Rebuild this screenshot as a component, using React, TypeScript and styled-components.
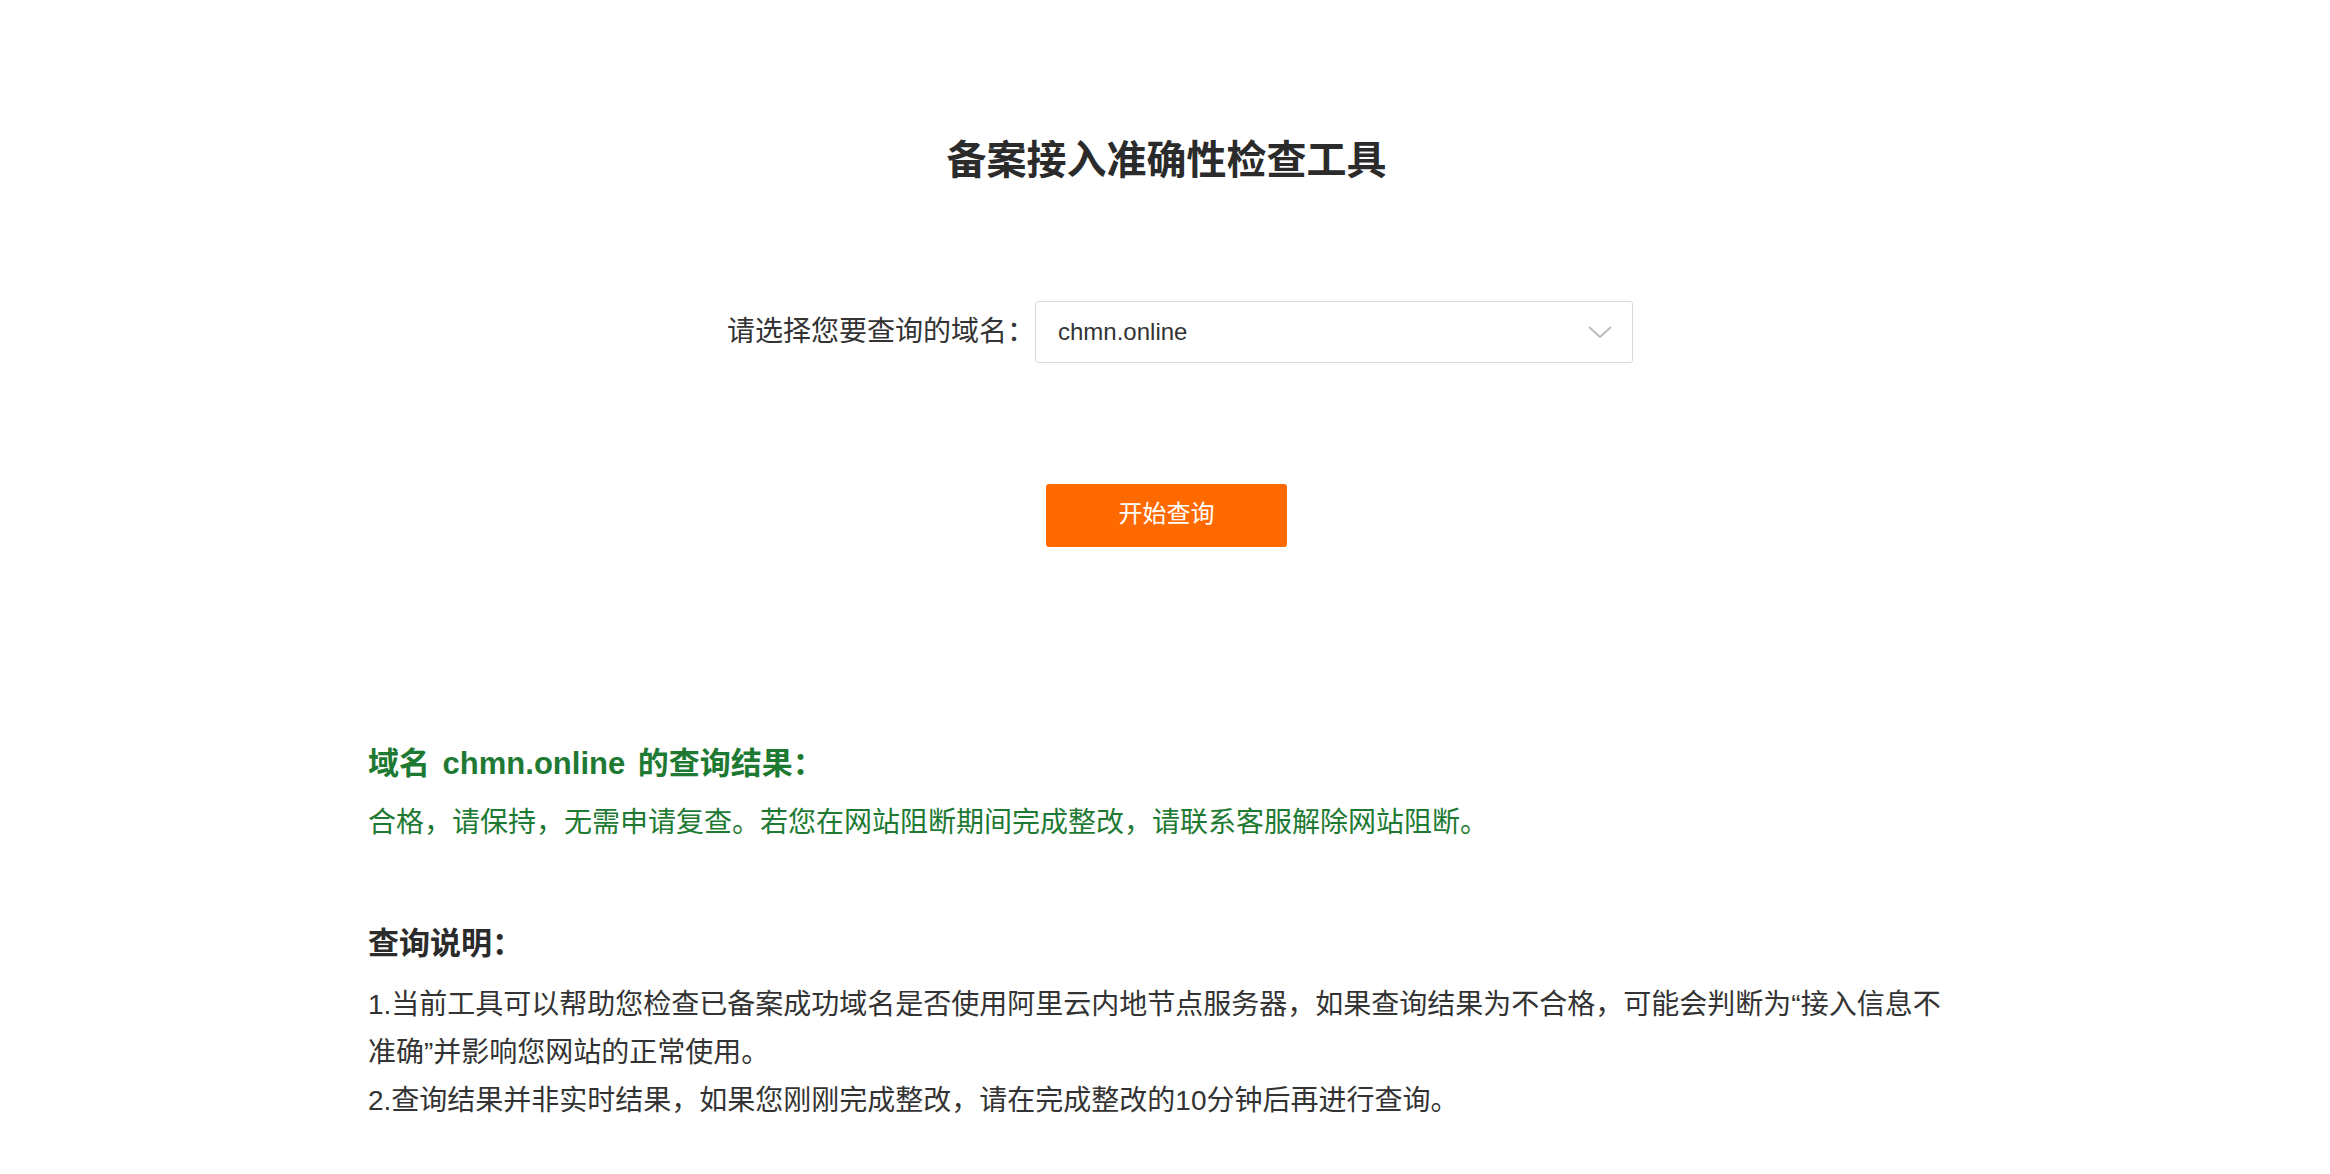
import React from "react";
import styled, { createGlobalStyle } from "styled-components";

const GlobalStyle = createGlobalStyle`
  html, body {
    margin: 0;
    padding: 0;
    background: #ffffff;
  }
  body {
    font-family: "Liberation Sans", "Noto Sans CJK SC", sans-serif;
    color: #333333;
  }
`;

const Page = styled.div`
  display: flex;
  flex-direction: column;
  align-items: center;
  padding-top: 132px;
  padding-bottom: 48px;
`;

const Title = styled.h1`
  margin: 0;
  font-size: 40px;
  line-height: 56px;
  font-weight: 700;
  color: #2b2b2b;
  padding-left: 3px;
`;

const FormRow = styled.div`
  display: flex;
  align-items: center;
  margin-top: 113px;
  padding-left: 30px;
`;

const Label = styled.label`
  font-size: 28px;
  line-height: 62px;
  color: #333333;
  white-space: nowrap;
`;

const SelectBox = styled.div`
  box-sizing: border-box;
  width: 598px;
  height: 62px;
  border: 1.5px solid #d9d9d9;
  border-radius: 3px;
  display: flex;
  align-items: center;
  justify-content: space-between;
  padding: 0 20px 0 22px;
  font-size: 24px;
  color: #333333;
  background: #fff;
`;

const Chevron = styled.svg`
  width: 24px;
  height: 12px;
  display: block;
`;

const Button = styled.button`
  margin-top: 121px;
  width: 241px;
  height: 63px;
  border: none;
  border-radius: 3px;
  background: #ff6a00;
  color: #ffffff;
  font-family: "Liberation Sans", "Noto Sans CJK SC", sans-serif;
  font-size: 24px;
  line-height: 59px;
  cursor: pointer;
  padding: 0 0 4px;
  margin-left: 3px;
`;

const Content = styled.div`
  width: 1594px;
  margin-top: 196px;
`;

const Heading = styled.h2<{ $green?: boolean }>`
  margin: 0;
  font-size: 31px;
  line-height: 42px;
  font-weight: 700;
  word-spacing: 4px;
  color: ${(p) => (p.$green ? "#1e7a33" : "#2b2b2b")};
`;

const Paragraph = styled.p<{ $green?: boolean; $gap?: number }>`
  margin: ${(p) => p.$gap ?? 0}px 0 0;
  font-size: 28px;
  line-height: 48px;
  color: ${(p) => (p.$green ? "#1e7a33" : "#333333")};
`;

const Notes = styled.section`
  margin-top: 76px;
`;

export default function App() {
  return (
    <>
      <GlobalStyle />
      <Page>
        <Title>备案接入准确性检查工具</Title>
        <FormRow>
          <Label>请选择您要查询的域名：</Label>
          <SelectBox>
            <span>chmn.online</span>
            <Chevron viewBox="0 0 24 12">
              <polyline
                points="1,1 12,11 23,1"
                fill="none"
                stroke="#bdbdbd"
                strokeWidth="2"
              />
            </Chevron>
          </SelectBox>
        </FormRow>
        <Button>开始查询</Button>
        <Content>
          <Heading $green>域名 chmn.online 的查询结果：</Heading>
          <Paragraph $green $gap={14}>
            合格，请保持，无需申请复查。若您在网站阻断期间完成整改，请联系客服解除网站阻断。
          </Paragraph>
          <Notes>
            <Heading>查询说明：</Heading>
            <Paragraph $gap={16}>
              1.当前工具可以帮助您检查已备案成功域名是否使用阿里云内地节点服务器，如果查询结果为不合格，可能会判断为“接入信息不准确”并影响您网站的正常使用。
            </Paragraph>
            <Paragraph>
              2.查询结果并非实时结果，如果您刚刚完成整改，请在完成整改的10分钟后再进行查询。
            </Paragraph>
          </Notes>
        </Content>
      </Page>
    </>
  );
}
